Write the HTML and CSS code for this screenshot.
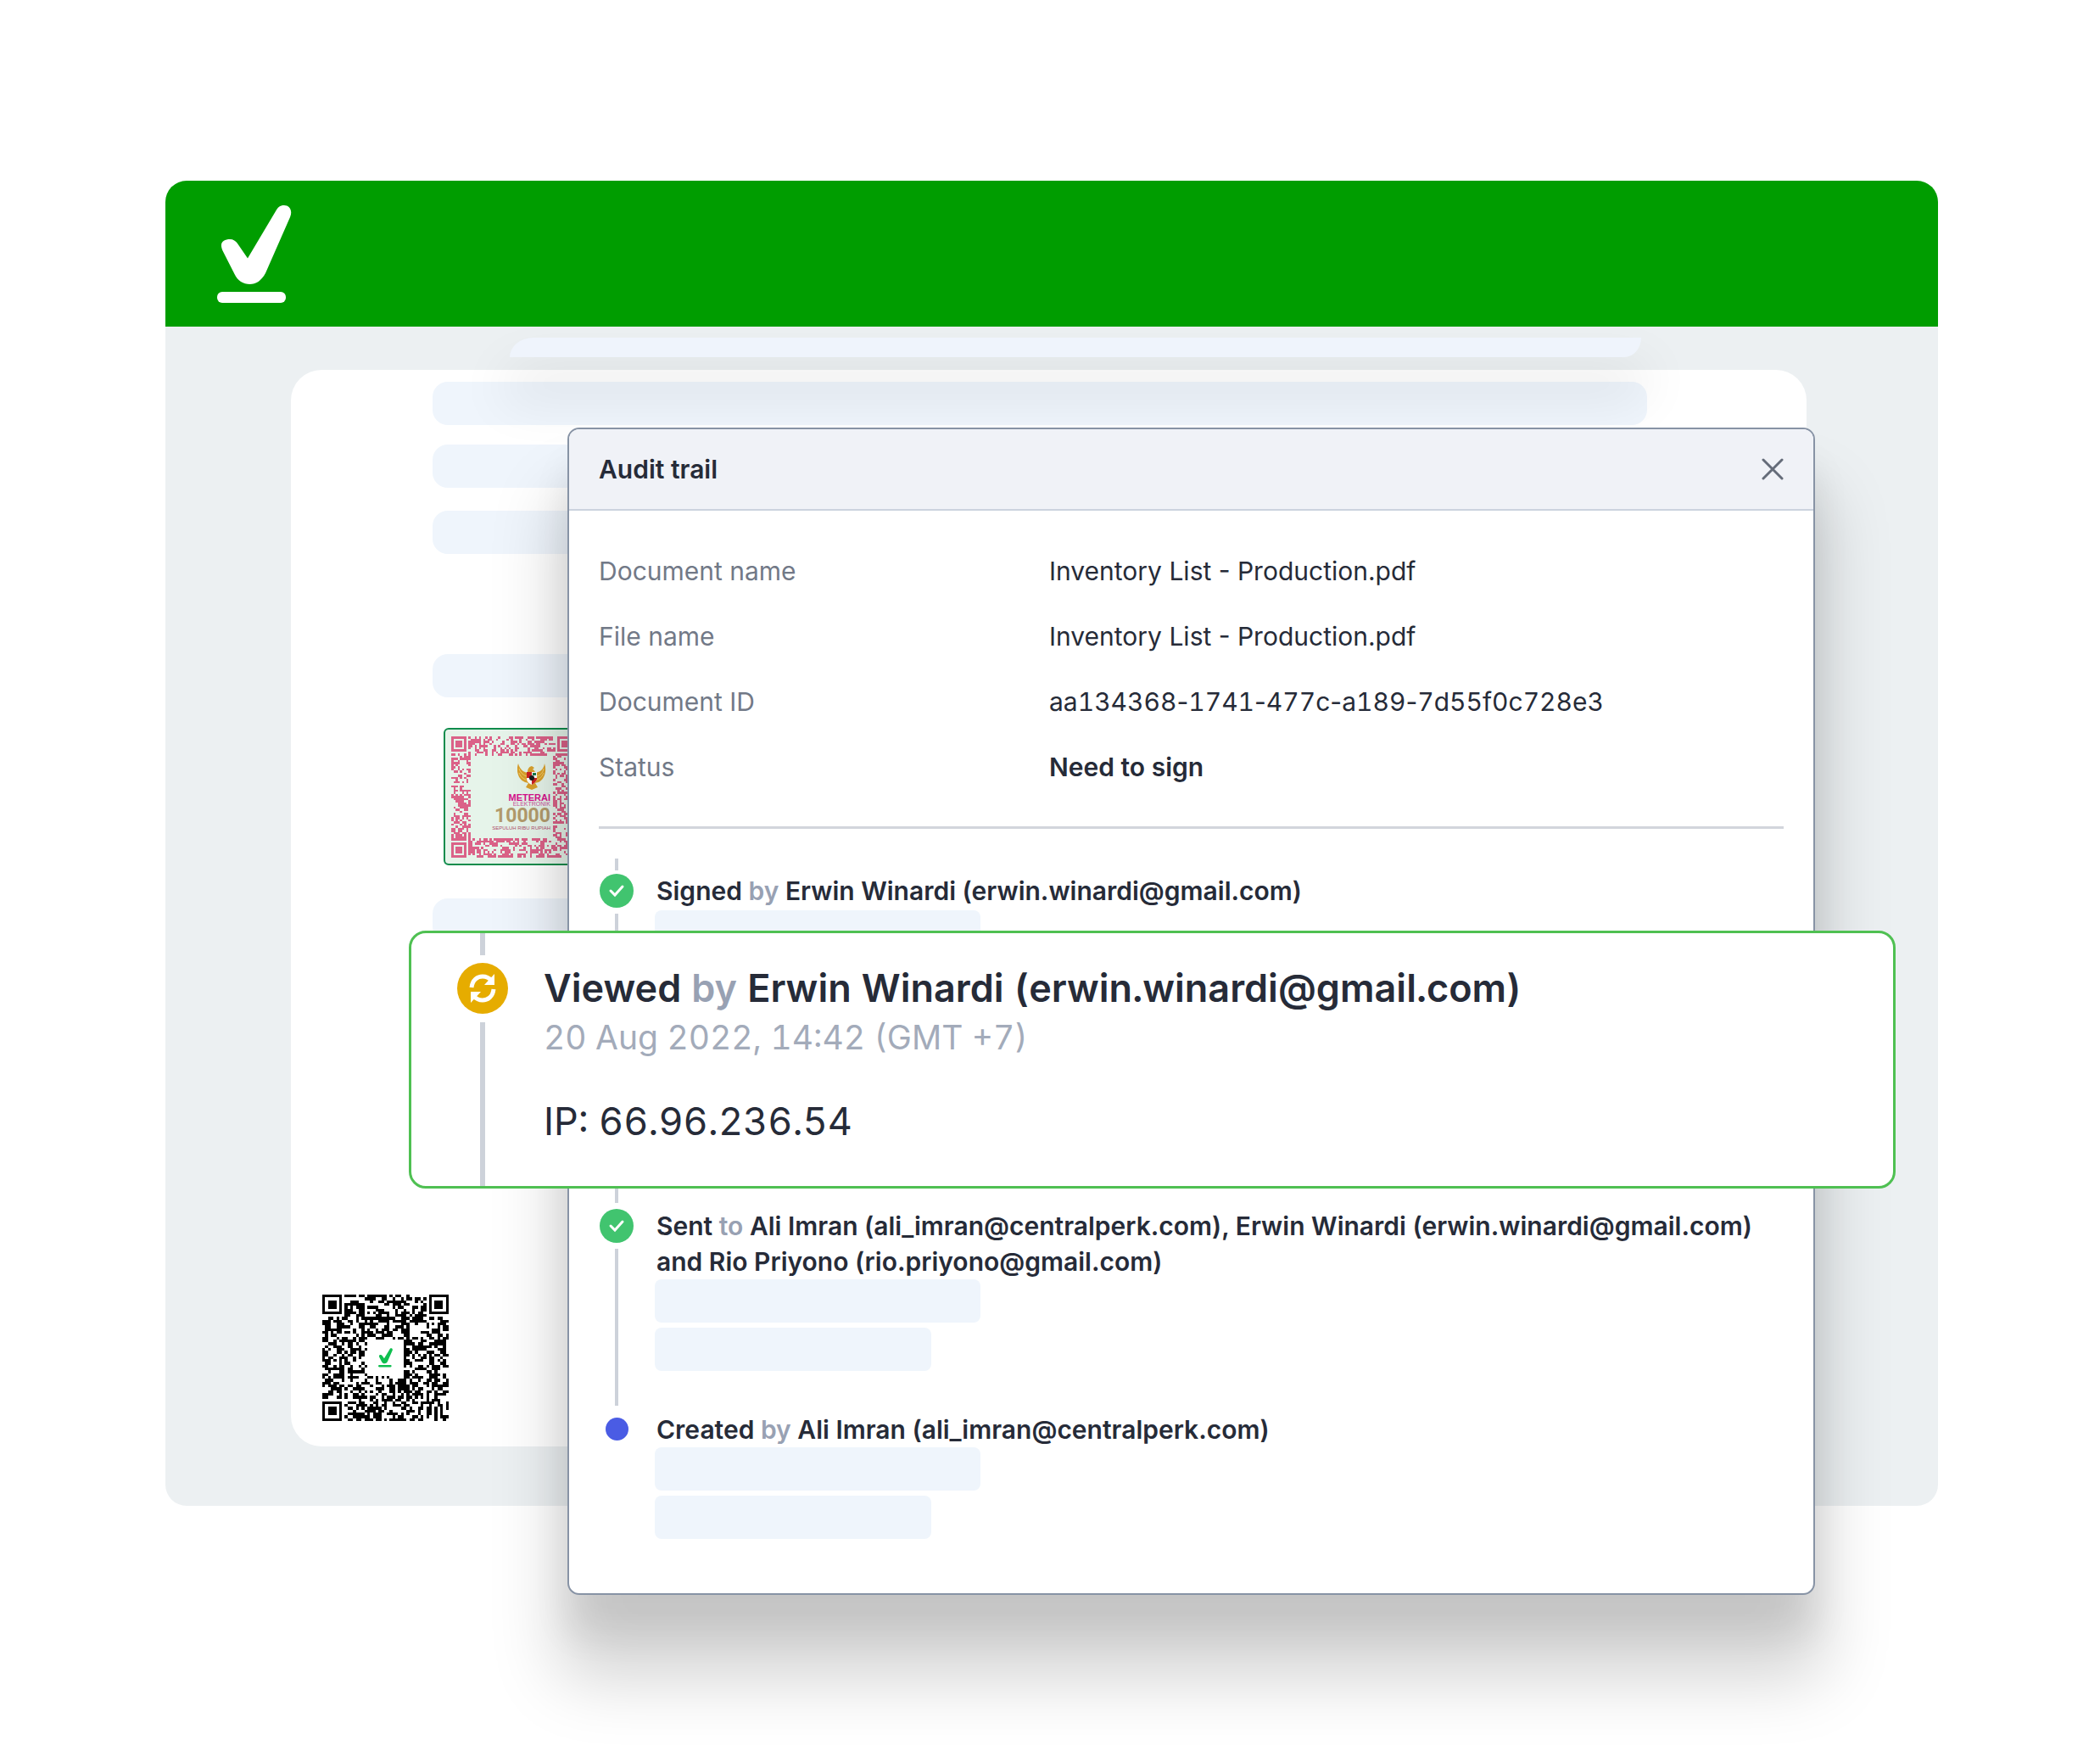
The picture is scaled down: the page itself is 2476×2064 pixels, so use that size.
FILE: index.html
```html
<!DOCTYPE html>
<html lang="en">
<head>
<meta charset="utf-8">
<title>Audit trail</title>
<link rel="stylesheet" href="styles.css">
</head>
<body>
<div class="stage">
  <div class="app">
    <header class="app-bar">
      <svg class="logo" viewBox="0 0 88 116" aria-label="Home" role="img">
        <path d="M6.500 53.500C2 43.500 8 40 15 40C19 40 22 42 24 45L36 62.500L69 7C71.500 2.500 74 0 79 0C85 0 89.500 6 86 14L57 80C52 89 46 93 38.500 93C31 93 24 89 20.500 81Z"/>
        <rect x="0" y="102" width="81" height="13" rx="6"/>
      </svg>
    </header>
    <div class="app-body">
      <div class="tab-strip"></div>
      <main class="paper">
        <div class="line"></div>
        <div class="line line-second"></div>
        <div class="line line-third"></div>
        <div class="line line-fourth"></div>
        <div class="stamp">
          <svg class="stamp-code" data-code="57" data-seed="11" data-hole="39" viewBox="0 0 57 57" shape-rendering="crispEdges"></svg>
          <div class="stamp-label">
            <svg class="garuda" viewBox="0 0 34 32">
              <path fill="#d9a02c" d="M1 0C3 7 7 10 12 11C12 7 13 4 17 3L20 5L18 7C20 8 21 9 21 11C27 10 31 7 32 0C35 9 32 19 25 22L21 23L24 28L17 31L10 28L13 23L9 22C1 19-2 9 1 0Z"/>
              <path fill="none" stroke="#f3cf6d" d="M2 6C4 12 8 14 11 15M2 11C4 16 7 18 10 19M31 6C30 12 26 14 23 15M31 11C29 16 26 18 23 19"/>
              <path fill="#fff" d="M11 10H23V19Q21 23 17 25Q12 23 11 19Z"/>
              <path fill="#c22" d="M11 10H17V17H11ZM17 17H23V19Q21 23 17 25Z"/>
              <path fill="#187a4a" d="M18 11H22V14H18Z"/>
              <circle cx="17" cy="17" r="3" fill="#1c1c1c"/>
            </svg>
            <span class="stamp-title">METERAI</span>
            <span class="stamp-sub">ELEKTRONIK</span>
            <span class="stamp-value">10000</span>
            <span class="stamp-words">SEPULUH RIBU RUPIAH</span>
          </div>
        </div>
        <div class="line line-fifth"></div>
        <div class="code">
          <svg data-code="45" data-seed="5" data-hole="13" viewBox="0 0 45 45" shape-rendering="crispEdges"></svg>
          <svg class="code-logo" viewBox="0 0 88 116">
            <path d="M6.500 53.500C2 43.500 8 40 15 40C19 40 22 42 24 45L36 62.500L69 7C71.500 2.500 74 0 79 0C85 0 89.500 6 86 14L57 80C52 89 46 93 38.500 93C31 93 24 89 20.500 81Z"/>
            <rect x="0" y="102" width="81" height="13" rx="6"/>
          </svg>
        </div>
      </main>
    </div>
  </div>

  <section class="dialog" role="dialog" aria-labelledby="dialog-title">
    <header class="dialog-head">
      <h1 id="dialog-title">Audit trail</h1>
      <button class="close" type="button" aria-label="Close">
        <svg viewBox="0 0 26 26"><path d="M2 2L24 24M24 2L2 24"/></svg>
      </button>
    </header>
    <dl class="facts">
      <dt>Document name</dt><dd>Inventory List - Production.pdf</dd>
      <dt>File name</dt><dd>Inventory List - Production.pdf</dd>
      <dt>Document ID</dt><dd class="num">aa134368<span>-</span>1741<span>-</span>477c<span>-</span>a189<span>-</span>7d55f0c728e3</dd>
      <dt>Status</dt><dd class="strong">Need to sign</dd>
    </dl>
    <ol class="trail">
      <li class="event">
        <div class="rail">
          <i class="stem stem-short"></i>
          <svg class="mark" viewBox="0 0 40 40"><circle cx="20" cy="20" r="20"/><path d="M13 20L18 25L27 15"/></svg>
          <i class="stem"></i>
        </div>
        <div class="event-text">
          <p>Signed <span>by</span> Erwin Winardi (erwin.winardi@gmail.com)</p>
          <div class="hint hint-cut"></div>
        </div>
      </li>
      <li class="event featured num">
        <div class="rail">
          <i class="stem stem-short"></i>
          <svg class="mark mark-view" viewBox="0 0 60 60"><circle cx="30" cy="30" r="30"/><path d="M17 29C18 20 24 16 30 16C35 16 38 18 41 21M43 31C42 40 36 44 30 44C25 44 22 42 19 39"/><path class="tip" d="M44 13V26H32ZM16 47V34H28Z"/></svg>
          <i class="stem"></i>
        </div>
        <div class="event-text">
          <p>Viewed <span>by</span> Erwin Winardi (erwin.winardi@gmail.com)</p>
          <time datetime="2022-08-20T14:42+07:00">20 Aug 2022, 14:42 (GMT +7)</time>
          <div class="address">IP: 66.96.236.54</div>
        </div>
      </li>
      <li class="event event-sent">
        <div class="rail">
          <i class="stem stem-short"></i>
          <svg class="mark" viewBox="0 0 40 40"><circle cx="20" cy="20" r="20"/><path d="M13 20L18 25L27 15"/></svg>
          <i class="stem"></i>
        </div>
        <div class="event-text">
          <p>Sent <span>to</span> Ali Imran (ali_imran@centralperk.com), Erwin Winardi (erwin.winardi@gmail.com) and Rio Priyono (rio.priyono@gmail.com)</p>
          <div class="hint"></div>
          <div class="hint hint-narrow"></div>
        </div>
      </li>
      <li class="event event-created">
        <div class="rail"><i class="dot"></i></div>
        <div class="event-text">
          <p>Created <span>by</span> Ali Imran (ali_imran@centralperk.com)</p>
          <div class="hint"></div>
          <div class="hint hint-narrow"></div>
        </div>
      </li>
    </ol>
  </section>
</div>
<script src="codes.js"></script>
</body>
</html>
```
FILE: styles.css
```css
* { box-sizing: border-box; }

body {
  margin: 0;
  background: #fff;
  color: #262b38;
  font-family: Inter, "Liberation Sans", sans-serif;
  font-size: 30px;
  line-height: 42px;
}

h1, p, dl, dd, ol { margin: 0; padding: 0; font-size: inherit; }

.num { font-variant-numeric: tabular-nums; }
dd.num span { font-variant-numeric: normal; }

.stage {
  position: relative;
  padding: 213px 191px 0 195px;
  min-height: 100vh;
  overflow: hidden;
}

.app {
  border-radius: 25px;
  overflow: hidden;
  background: #ecf0f2;
}

.app-bar {
  background: #009d00;
  height: 172px;
  padding: 29px 61px;
}

.logo { display: block; width: 88px; height: 116px; fill: #fff; }

.app-body { padding: 13px 155px 70px 148px; }

.tab-strip {
  position: relative;
  height: 23px;
  margin: 0 195px 15px 258px;
  background: #eff4fc;
  border-radius: 28px 0 20px 0 / 23px 0 23px 0;
  box-shadow: 0 42px 60px 10px rgba(0, 0, 0, .08);
}

.paper {
  background: #fff;
  border-radius: 36px;
  padding: 14px 188px 30px 167px;
}

.line {
  height: 51px;
  border-radius: 18px;
  background: #eff5fc;
}
.line-second { margin-top: 23px; }
.line-third { margin-top: 27px; }
.line-fourth { margin-top: 118px; }
.line-fifth { margin-top: 39px; }

.stamp {
  position: relative;
  width: 162px;
  height: 162px;
  margin: 36px 0 0 13px;
  border: 2px solid #108c4c;
  border-radius: 6px;
  background: #e6f4ea;
  padding: 8px 7px;
}
.stamp-code { display: block; width: 143px; height: 143px; fill: #db6288; }
.stamp-label {
  position: absolute;
  top: 40px;
  right: 34px;
  display: flex;
  flex-direction: column;
  align-items: flex-end;
  font-family: "Liberation Sans", sans-serif;
  white-space: nowrap;
}
.garuda { width: 34px; height: 32px; margin: 0 5px 3px 0; }
.stamp-title { font-size: 11px; line-height: 10px; font-weight: 700; color: #d6118c; }
.stamp-sub { font-size: 7px; line-height: 6px; color: #c9529a; }
.stamp-value { font-family: Roboto, sans-serif; font-size: 23px; line-height: 22px; font-weight: 700; color: #b39b6c; }
.stamp-words { font-size: 6px; line-height: 6px; color: #b0506e; }

.code {
  display: grid;
  place-items: center;
  width: 149px;
  height: 150px;
  margin: 415px 0 0 -130px;
}
.code > svg { grid-area: 1 / 1; width: 149px; height: 149px; }
.code > .code-logo { width: 17px; height: 23px; fill: #0fbf4f; }

.dialog {
  position: absolute;
  top: 504px;
  left: 669px;
  right: 336px;
  background: #fff;
  border: 2px solid #8793a5;
  border-radius: 14px;
  box-shadow: 0 88px 80px 12px rgba(0, 0, 0, .17), 0 44px 44px rgba(0, 0, 0, .08);
}

.dialog-head {
  display: flex;
  align-items: center;
  justify-content: space-between;
  height: 96px;
  padding: 0 35px;
  background: #f0f2f7;
  border-bottom: 2px solid #ccd3de;
  border-radius: 12px 12px 0 0;
}
.dialog-head h1 { font-weight: 600; }

.close { border: 0; background: none; padding: 0; width: 26px; height: 26px; }
.close svg { display: block; width: 26px; height: 26px; fill: none; stroke: #656c79; stroke-width: 3; stroke-linecap: round; }

.facts {
  display: grid;
  grid-template-columns: 531px 1fr;
  row-gap: 35px;
  margin: 0 35px;
  padding: 50px 0 49px;
  border-bottom: 3px solid #d2d5dc;
}
.facts dt { color: #727987; }
.strong { font-weight: 600; }

.trail { list-style: none; padding: 35px 35px 64px; }

.event { display: grid; grid-template-columns: 42px 1fr; column-gap: 26px; }
.event p { font-weight: 600; }
.event p span { color: #98a1b3; }

.rail { display: flex; flex-direction: column; align-items: center; }
.stem { flex: 1; width: 4px; background: #cdd2da; }
.stem-short { flex: none; height: 14px; margin-bottom: 4px; }
.mark { width: 40px; height: 40px; margin-bottom: 7px; fill: #41c46f; }
.mark path { fill: none; stroke: #fff; stroke-width: 3; stroke-linecap: round; }

.event-text { padding-top: 17px; }
.hint {
  width: 384px;
  height: 51px;
  margin: 0 0 6px -2px;
  border-radius: 8px;
  background: #eff5fc;
}
.hint-narrow { width: 326px; margin-bottom: 0; }
.hint-cut { height: 24px; margin: 2px 0 0 -2px; border-radius: 8px 8px 0 0; }

.featured {
  position: relative;
  grid-template-columns: 60px 1fr;
  column-gap: 42px;
  margin: 0 -132px 0 -224px;
  padding-left: 54px;
  height: 304px;
  border: 3px solid #4fc052;
  border-radius: 20px;
  background: #fff;
}
.featured .event-text { padding-top: 40px; }
.featured p { font-size: 45px; line-height: 50px; }
.featured time { display: block; margin-top: 6px; font-size: 39px; line-height: 54px; color: #a3abba; }
.featured .address { margin-top: 44px; font-size: 45px; line-height: 56px; }
.featured .stem { width: 6px; }
.featured .stem-short { height: 26px; margin-bottom: 9px; }
.mark-view { width: 60px; height: 60px; margin-bottom: 10px; fill: #e6ac00; }
.mark-view path { stroke-width: 5; stroke-linecap: butt; }
.mark-view .tip { fill: #fff; stroke: none; }

.event-sent .stem-short { height: 17px; margin-bottom: 7px; }
.event-sent .event-text { padding: 23px 0 41px; }

.event-created .event-text { padding-top: 7px; }
.dot { width: 27px; height: 27px; margin-top: 14px; border-radius: 50%; background: #4a5ce4; }
```
FILE: codes.js
```js
// Draws the square codes: three finder marks, seeded modules and a clear centre.
document.querySelectorAll('svg[data-code]').forEach(function (svg) {
  var n = +svg.dataset.code, hole = +svg.dataset.hole, seed = +svg.dataset.seed;
  var lo = (n - hole) / 2, hi = n - lo, d = '';
  var corners = [[0, 0], [n - 7, 0], [0, n - 7]];
  function rand() {
    seed = (seed * 1103515245 + 12345) % 2147483648;
    return seed / 2147483648;
  }
  for (var y = 0; y < n; y++) {
    for (var x = 0; x < n; x++) {
      var on = rand() < 0.52;
      if (x >= lo && x < hi && y >= lo && y < hi) on = false;
      corners.forEach(function (c) {
        var dx = x - c[0], dy = y - c[1];
        if (dx < -1 || dx > 7 || dy < -1 || dy > 7) return;
        var r = Math.max(Math.abs(dx - 3), Math.abs(dy - 3));
        on = r === 3 || r < 2;
      });
      if (on) d += 'M' + x + ' ' + y + 'h1v1h-1z';
    }
  }
  var path = document.createElementNS('http://www.w3.org/2000/svg', 'path');
  path.setAttribute('d', d);
  svg.appendChild(path);
});
```
